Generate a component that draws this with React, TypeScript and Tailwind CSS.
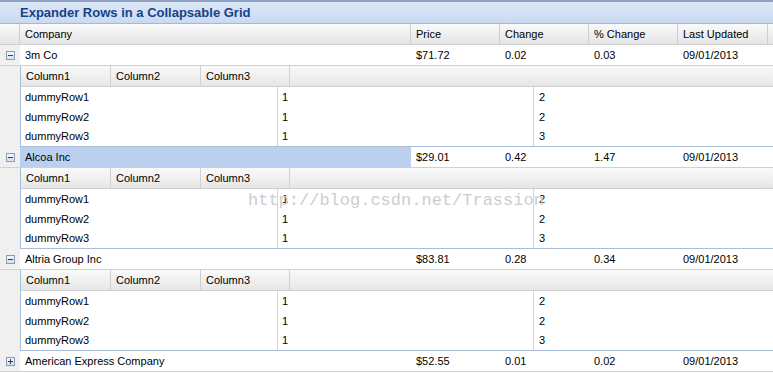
import React from "react";

type Stock = {
  company: string;
  price: string;
  change: string;
  pct: string;
  updated: string;
  expanded: boolean;
  selected?: boolean;
  dummy: string[];
};

const stocks: Stock[] = [
  { company: "3m Co", price: "$71.72", change: "0.02", pct: "0.03", updated: "09/01/2013", expanded: true, dummy: ["2", "2", "3"] },
  { company: "Alcoa Inc", price: "$29.01", change: "0.42", pct: "1.47", updated: "09/01/2013", expanded: true, selected: true, dummy: ["2", "2", "3"] },
  { company: "Altria Group Inc", price: "$83.81", change: "0.28", pct: "0.34", updated: "09/01/2013", expanded: true, dummy: ["2", "2", "3"] },
  { company: "American Express Company", price: "$52.55", change: "0.01", pct: "0.02", updated: "09/01/2013", expanded: false, dummy: [] },
];

function ToggleIcon({ open }: { open: boolean }) {
  return (
    <svg width="9" height="9" viewBox="0 0 9 9">
      <rect x="0.5" y="0.5" width="8" height="8" fill="#dbe4f0" stroke="#8d9bb3" />
      <rect x="1" y="1" width="7" height="3" fill="#eef3f9" />
      <line x1="2" y1="4.5" x2="7" y2="4.5" stroke="#2b3f63" />
      {!open && <line x1="4.5" y1="2" x2="4.5" y2="7" stroke="#2b3f63" />}
    </svg>
  );
}

function SubGrid({ dummy }: { dummy: string[] }) {
  return (
    <div className="flex">
      <div className="w-[20px] shrink-0 bg-[#f0f0f0]" />
      <div className="flex-1 border-l border-[#a9bfd9]">
        <div className="flex h-[21px] border-b border-[#d0d0d0] bg-gradient-to-b from-[#fafafa] to-[#e6e6e6]">
          <div className="w-[90px] border-r border-[#d0d0d0] px-[5px] flex items-center">Column1</div>
          <div className="w-[90px] border-r border-[#d0d0d0] px-[5px] flex items-center">Column2</div>
          <div className="w-[89px] border-r border-[#d0d0d0] px-[5px] flex items-center">Column3</div>
          <div className="flex-1" />
        </div>
        <div className="border-b border-[#a9bfd9]">
          {["dummyRow1", "dummyRow2", "dummyRow3"].map((r, i) => (
            <div key={r} className={"flex " + (i === 2 ? "h-[19px]" : "h-[20px]")}>
              <div className="w-[257px] border-r border-[#c9d6e8] px-[4px] flex items-center">{r}</div>
              <div className="w-[256px] border-r border-[#c9d6e8] px-[4px] flex items-center">1</div>
              <div className="flex-1 px-[5px] flex items-center">{dummy[i]}</div>
            </div>
          ))}
        </div>
      </div>
    </div>
  );
}

export default function App() {
  return (
    <div className="relative w-[773px] h-[373px] overflow-hidden bg-white text-[11px] text-black font-['Liberation_Sans',Arial,sans-serif]">
      <div className="h-[24px] border-t-2 border-[#8fa3c2] border-b border-b-[#99bbe8] bg-gradient-to-b from-[#dce8f7] to-[#c9daf0] pl-[20px] flex items-center">
        <span className="text-[13px] font-bold text-[#15428b]">Expander Rows in a Collapsable Grid</span>
      </div>

      <div className="flex h-[21px] border-b border-[#d0d0d0] bg-gradient-to-b from-[#fafafa] to-[#e4e5e7]">
        <div className="w-[20px] border-r border-[#d0d0d0]" />
        <div className="w-[391px] border-r border-[#d0d0d0] px-[5px] flex items-center">Company</div>
        <div className="w-[89px] border-r border-[#d0d0d0] px-[5px] flex items-center">Price</div>
        <div className="w-[89px] border-r border-[#d0d0d0] px-[5px] flex items-center">Change</div>
        <div className="w-[89px] border-r border-[#d0d0d0] px-[5px] flex items-center">% Change</div>
        <div className="w-[90px] border-r border-[#d0d0d0] px-[5px] flex items-center">Last Updated</div>
        <div className="flex-1" />
      </div>

      {stocks.map((s) => (
        <div key={s.company}>
          <div className="flex h-[21px] border-b border-[#c4d3e8]">
            <div className="w-[20px] bg-[#f0f0f0] flex items-center justify-center">
              <ToggleIcon open={s.expanded} />
            </div>
            <div className={"w-[391px] px-[5px] flex items-center " + (s.selected ? "bg-[#bad0ee]" : "")}>{s.company}</div>
            <div className="w-[89px] px-[5px] flex items-center">{s.price}</div>
            <div className="w-[89px] px-[5px] flex items-center">{s.change}</div>
            <div className="w-[89px] px-[5px] flex items-center">{s.pct}</div>
            <div className="w-[90px] px-[5px] flex items-center">{s.updated}</div>
            <div className="flex-1" />
          </div>
          {s.expanded && <SubGrid dummy={s.dummy} />}
        </div>
      ))}

      <div className="absolute left-[248px] top-[188px] text-[17px] text-[#cdcdcd] font-['Liberation_Mono',monospace] pointer-events-none">
        http://blog.csdn.net/Trassion
      </div>
    </div>
  );
}
